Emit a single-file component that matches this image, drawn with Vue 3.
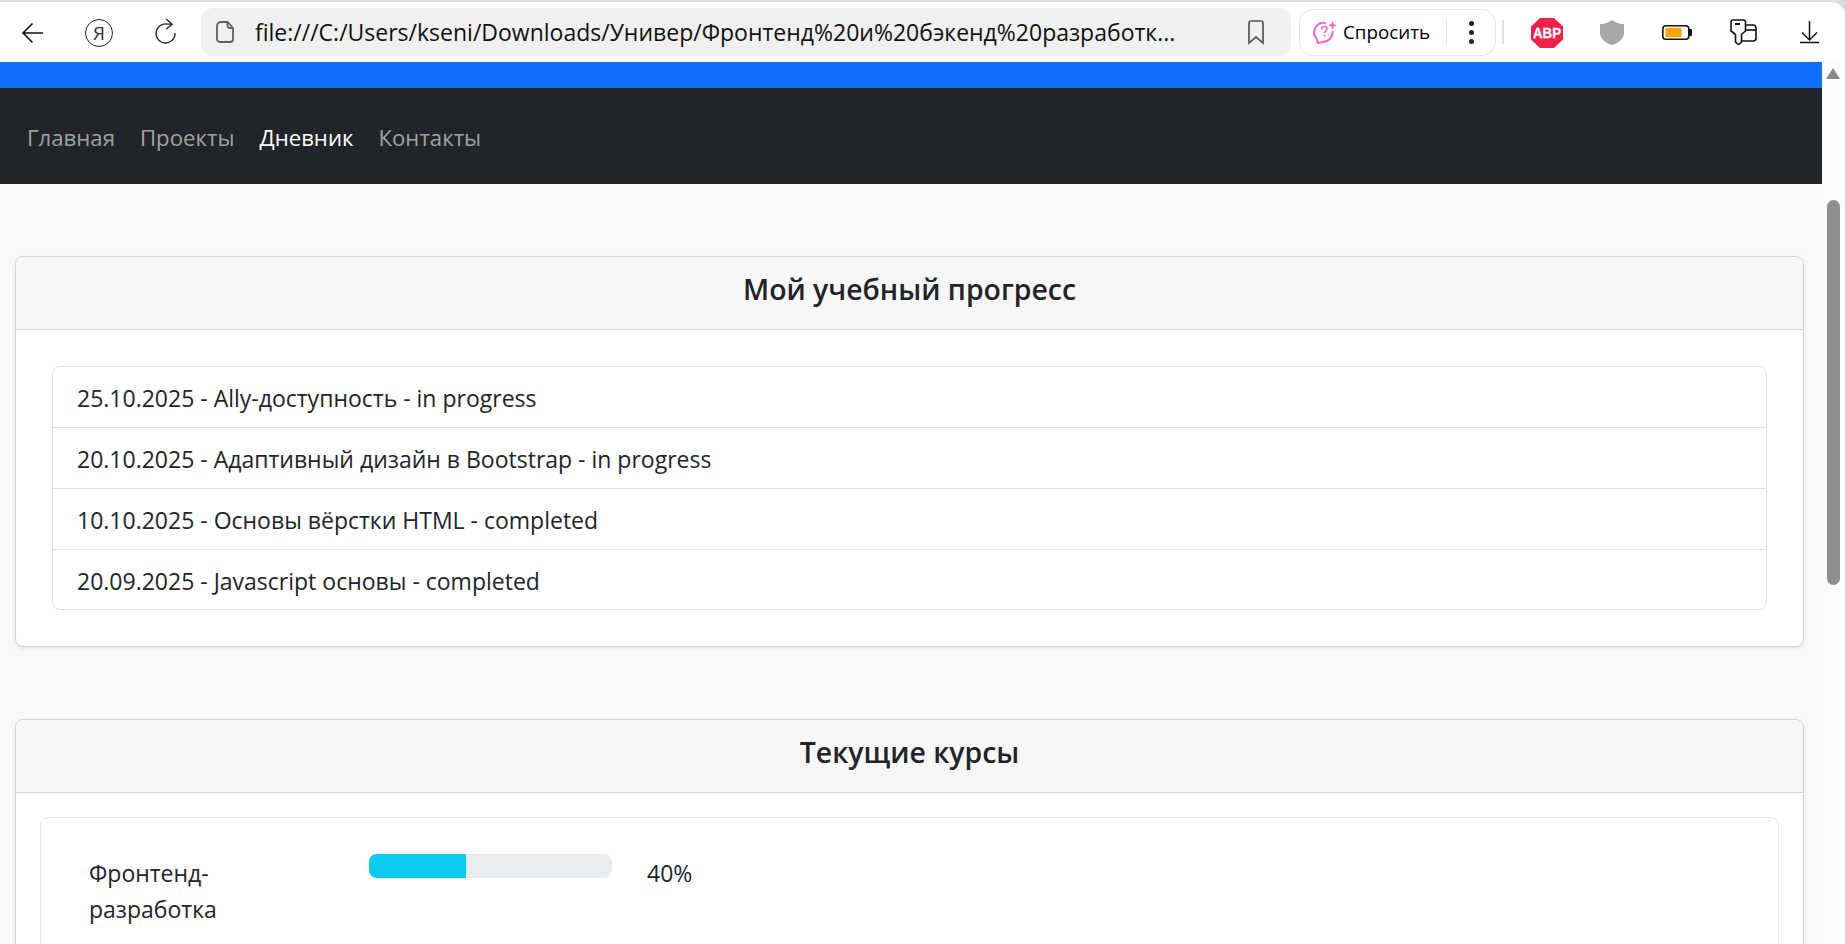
<template>
  <div class="window">
    <header class="toolbar">
      <button class="tool back">
        <svg width="26" height="26" viewBox="0 0 26 26" fill="none" stroke="#111" stroke-width="1.6">
          <path d="M23 14H3M12.500 4.500L3 14l9.500 9.500" />
        </svg>
      </button>
      <button class="tool ya">
        <span class="ya-circle">Я</span>
      </button>
      <button class="tool reload">
        <svg width="30" height="30" viewBox="0 0 30 30" fill="none" stroke="#222" stroke-width="1.3">
          <path d="M20 7.200H15.500A9.500 9.500 0 1 0 23 16" />
          <path d="M14.200 2l6 5.200-6 5" />
        </svg>
      </button>

      <div class="address">
        <svg class="file-icon" width="20" height="24" viewBox="0 0 20 24" fill="none" stroke="#5f5f5f" stroke-width="1.800">
          <path d="M6 2h6.500L18 8v11a3 3 0 0 1-3 3H5a3 3 0 0 1-3-3V6a4 4 0 0 1 4-4z" />
          <path d="M12.500 2v3.500A2.500 2.500 0 0 0 15 8h3" />
        </svg>
        <span class="url">file:///C:/Users/kseni/Downloads/Универ/Фронтенд%20и%20бэкенд%20разработк...</span>
        <svg class="bookmark" width="20" height="26" viewBox="0 0 20 26" fill="none" stroke="#555" stroke-width="1.700">
          <path d="M3 4a2 2 0 0 1 2-2h10a2 2 0 0 1 2 2v20l-7-6-7 6z" />
        </svg>
      </div>

      <div class="ask">
        <svg width="26" height="28" viewBox="0 0 26 28" fill="none" stroke="url(#ask-gradient)" stroke-width="2">
          <defs>
            <linearGradient id="ask-gradient" x1="0" y1="0" x2="1" y2="1">
              <stop offset="0" stop-color="#e56bf0" />
              <stop offset="1" stop-color="#ff5fb4" />
            </linearGradient>
          </defs>
          <path d="M13 5.200A9.500 9.500 0 0 0 3.400 20.500L5 25l5.500-1.300A9.500 9.500 0 0 0 19.500 13" />
          <path d="M8.500 11.500c0-3.800 5.500-3.800 5.500-.8 0 2-2.500 2.300-2.500 4.300M11.500 16.500v2" stroke-width="1.600" />
          <path d="M19.500 3l1.300 3 3 1.300-3 1.300-1.300 3-1.300-3-3-1.300 3-1.300z" fill="#f36ac8" stroke="none" />
        </svg>
        <span class="ask-label">Спросить</span>
        <i class="ask-divider"></i>
        <span class="dots"><i></i><i></i><i></i></span>
      </div>
      <i class="tool-separator"></i>

      <div class="extensions">
        <svg class="ext-abp" width="32" height="30" viewBox="0 0 32 30">
          <path d="M9 0h14l9 8.500v13L23 30H9l-9-8.500v-13z" fill="#f0214a" />
          <text x="16" y="20" text-anchor="middle" textLength="28" lengthAdjust="spacingAndGlyphs" class="abp-text">ABP</text>
        </svg>
        <svg class="ext-shield" width="24" height="25" viewBox="0 0 24 25">
          <path d="M12 0l3 2c3 1.500 6 2 9 2v9c0 6-6 10-12 12C6 23 0 19 0 13V4c3 0 6-.5 9-2z" fill="#a6a6a6" />
        </svg>
        <svg class="ext-battery" width="30" height="15" viewBox="0 0 30 15">
          <rect x="0.800" y="0.800" width="26" height="13.400" rx="3" fill="#fff" stroke="#111" stroke-width="1.600" />
          <rect x="3.500" y="2.800" width="16" height="9.400" rx="1" fill="#f7a600" />
          <rect x="27" y="4" width="3" height="7" rx="1" fill="#111" />
        </svg>
        <svg class="ext-wallet" width="27" height="26" viewBox="0 0 27 26" fill="none" stroke="#111" stroke-width="1.600">
          <path d="M3 1h10.500a2 2 0 0 1 2 2v9l-4 3.500V23l-3 2.500-3-2.500v-7.500L1 12V3a2 2 0 0 1 2-2z" />
          <path d="M5 5h5" stroke-width="2" />
          <path d="M15.500 6H23a3 3 0 0 1 3 3v10a3 3 0 0 1-3 3H11.500" />
          <path d="M15.500 11H26" />
        </svg>
        <svg class="ext-download" width="20" height="24" viewBox="0 0 20 24" fill="none" stroke="#111" stroke-width="1.500">
          <path d="M9.500 1v19M2 12.500l7.500 7.500 7.500-7.500" />
          <path d="M0 22.500h19" />
        </svg>
      </div>
    </header>

    <div class="viewport">
      <div class="page">
        <div class="blue-strip"></div>
        <nav class="site-nav">
          <a
            v-for="link in links"
            :key="link"
            class="nav-link"
            :class="{ active: link === 'Дневник' }"
          >{{ link }}</a>
        </nav>

        <main class="content">
          <section class="card">
            <h2 class="card-header">Мой учебный прогресс</h2>
            <div class="card-body progress-body">
              <ul class="list">
                <li v-for="entry in entries" :key="entry" class="list-item">{{ entry }}</li>
              </ul>
            </div>
          </section>

          <section class="card">
            <h2 class="card-header">Текущие курсы</h2>
            <div class="card-body courses-body">
              <div class="course-box">
                <div v-for="course in courses" :key="course.name" class="course-row">
                  <span class="course-name">{{ course.name }}</span>
                  <div class="bar">
                    <div class="bar-fill" :style="{ width: course.percent + '%' }"></div>
                  </div>
                  <span class="course-percent">{{ course.percent }}%</span>
                </div>
              </div>
            </div>
          </section>
        </main>
      </div>

      <aside class="scrollbar">
        <span class="scroll-arrow"></span>
        <span class="scroll-thumb"></span>
      </aside>
    </div>
  </div>
</template>

<script setup>
const links = ['Главная', 'Проекты', 'Дневник', 'Контакты']

const entries = [
  '25.10.2025 - Ally-доступность - in progress',
  '20.10.2025 - Адаптивный дизайн в Bootstrap - in progress',
  '10.10.2025 - Основы вёрстки HTML - completed',
  '20.09.2025 - Javascript основы - completed'
]

const courses = [{ name: 'Фронтенд-разработка', percent: 40 }]
</script>

<style>
html,
body {
  margin: 0;
  overflow: hidden;
}
</style>

<style scoped>
.window {
  width: 1845px;
  height: 944px;
  display: flex;
  flex-direction: column;
  overflow: hidden;
  background: #dcdce0;
  font-family: "Open Sans", "Noto Sans", sans-serif;
  color: #212529;
}

.toolbar {
  flex: none;
  height: 60px;
  margin-top: 2px;
  display: flex;
  align-items: center;
  background: #fff;
  border-top-right-radius: 14px;
}

.tool {
  height: 48px;
  padding: 0;
  border: none;
  background: none;
  display: flex;
  align-items: center;
  justify-content: center;
}

.back {
  width: 66px;
}

.ya {
  width: 66px;
}

.ya-circle {
  width: 26px;
  height: 26px;
  margin-top: 1px;
  border: 1.3px solid #222;
  border-radius: 50%;
  display: flex;
  align-items: center;
  justify-content: center;
  font-family: "Open Sans", sans-serif;
  font-size: 19px;
  font-weight: 400;
  color: #333;
}

.reload {
  width: 69px;
}

.address {
  width: 1090px;
  height: 48px;
  display: flex;
  align-items: center;
  background: #f0f0f0;
  border-radius: 12px;
  position: relative;
}

.file-icon {
  margin-left: 14px;
}

.url {
  margin-left: 20px;
  font-size: 23px;
  color: #111;
  white-space: nowrap;
}

.bookmark {
  position: absolute;
  left: 1045px;
  top: 11px;
}

.ask {
  width: 197px;
  height: 47px;
  margin-left: 8px;
  box-sizing: border-box;
  display: flex;
  align-items: center;
  padding-left: 13px;
  border: 1px solid #e6e6e6;
  border-radius: 14px;
}

.ask-label {
  margin-left: 4px;
  font-size: 18.8px;
  color: #000;
}

.ask-divider {
  width: 1px;
  height: 26px;
  margin-left: auto;
  background: #e4e4e4;
}

.dots {
  margin: 0 21px 0 22px;
  display: flex;
  flex-direction: column;
  gap: 4px;
}

.dots i {
  width: 5px;
  height: 5px;
  border-radius: 50%;
  background: #222;
}

.tool-separator {
  width: 2px;
  height: 24px;
  margin-left: 6px;
  background: #dfdfdf;
}

.extensions {
  flex: 1;
  display: flex;
  align-items: center;
  padding-left: 27px;
}

.ext-abp {
  margin-top: 1px;
}

.ext-shield {
  margin-left: 37px;
  margin-top: 1px;
}

.ext-battery {
  margin-left: 38px;
  margin-top: 1px;
}

.ext-wallet {
  margin-left: 38px;
}

.ext-download {
  margin-left: 43px;
}

.abp-text {
  font-family: "Liberation Sans", sans-serif;
  font-weight: 700;
  font-size: 14px;
  fill: #fff;
  stroke: #fff;
  stroke-width: 0.3px;
}

.viewport {
  flex: 1;
  min-height: 0;
  display: flex;
  background: #f8f9fa;
}

.page {
  flex: 1;
  min-width: 0;
}

.blue-strip {
  height: 26px;
  background: #0d6efd;
}

.site-nav {
  height: 96px;
  box-sizing: border-box;
  display: flex;
  align-items: center;
  gap: 25px;
  padding: 2px 0 0 27px;
  background: #212529;
}

.nav-link {
  font-size: 22.2px;
  color: rgba(255, 255, 255, 0.58);
}

.nav-link.active {
  color: #fff;
  font-weight: 500;
}

.content {
  padding: 72px 18px 0 15px;
  display: flex;
  flex-direction: column;
  gap: 72px;
}

.card {
  background: #fff;
  border: 1px solid #d3d4d5;
  border-radius: 8px;
  box-shadow: 0 2px 5px rgba(0, 0, 0, 0.08);
}

.card-header {
  margin: 0;
  height: 73px;
  box-sizing: border-box;
  padding-bottom: 9px;
  display: flex;
  align-items: center;
  justify-content: center;
  font-size: 28.4px;
  font-weight: 600;
  background: #f7f7f7;
  border-bottom: 1px solid #d3d4d5;
  border-radius: 8px 8px 0 0;
}

.progress-body {
  padding: 36px;
}

.courses-body {
  padding: 24px;
}

.list {
  margin: 0;
  padding: 0;
  list-style: none;
  border: 1px solid #dee2e6;
  border-radius: 8px;
}

.list-item {
  height: 60px;
  box-sizing: border-box;
  padding: 2px 24px 0;
  display: flex;
  align-items: center;
  font-size: 23px;
}

.list-item + .list-item {
  height: 61px;
  border-top: 1px solid #dee2e6;
}

.list-item:last-child {
  height: 60px;
}

.course-box {
  border: 1px solid #e4e6e9;
  border-radius: 8px;
  padding: 36px 48px;
}

.course-row {
  display: grid;
  grid-template-columns: 208px 243px auto;
  align-items: start;
  font-size: 23px;
  line-height: 36px;
}

.course-name {
  padding-top: 1px;
}

.bar {
  height: 24px;
  margin-left: 72px;
  width: 243px;
  overflow: hidden;
  background: #e9ecef;
  border-radius: 8px;
}

.bar-fill {
  height: 100%;
  background: #0dcaf0;
}

.course-percent {
  margin-left: 107px;
  padding-top: 1px;
}

.scrollbar {
  flex: none;
  width: 23px;
  position: relative;
  background: #fbfbfb;
}

.scroll-arrow {
  position: absolute;
  left: 4px;
  top: 6px;
  width: 0;
  height: 0;
  border-left: 7.5px solid transparent;
  border-right: 7.5px solid transparent;
  border-bottom: 11px solid #8a8a8a;
}

.scroll-thumb {
  position: absolute;
  left: 5px;
  top: 138px;
  width: 13px;
  height: 385px;
  border-radius: 7px;
  background: #8e8e8e;
}
</style>
